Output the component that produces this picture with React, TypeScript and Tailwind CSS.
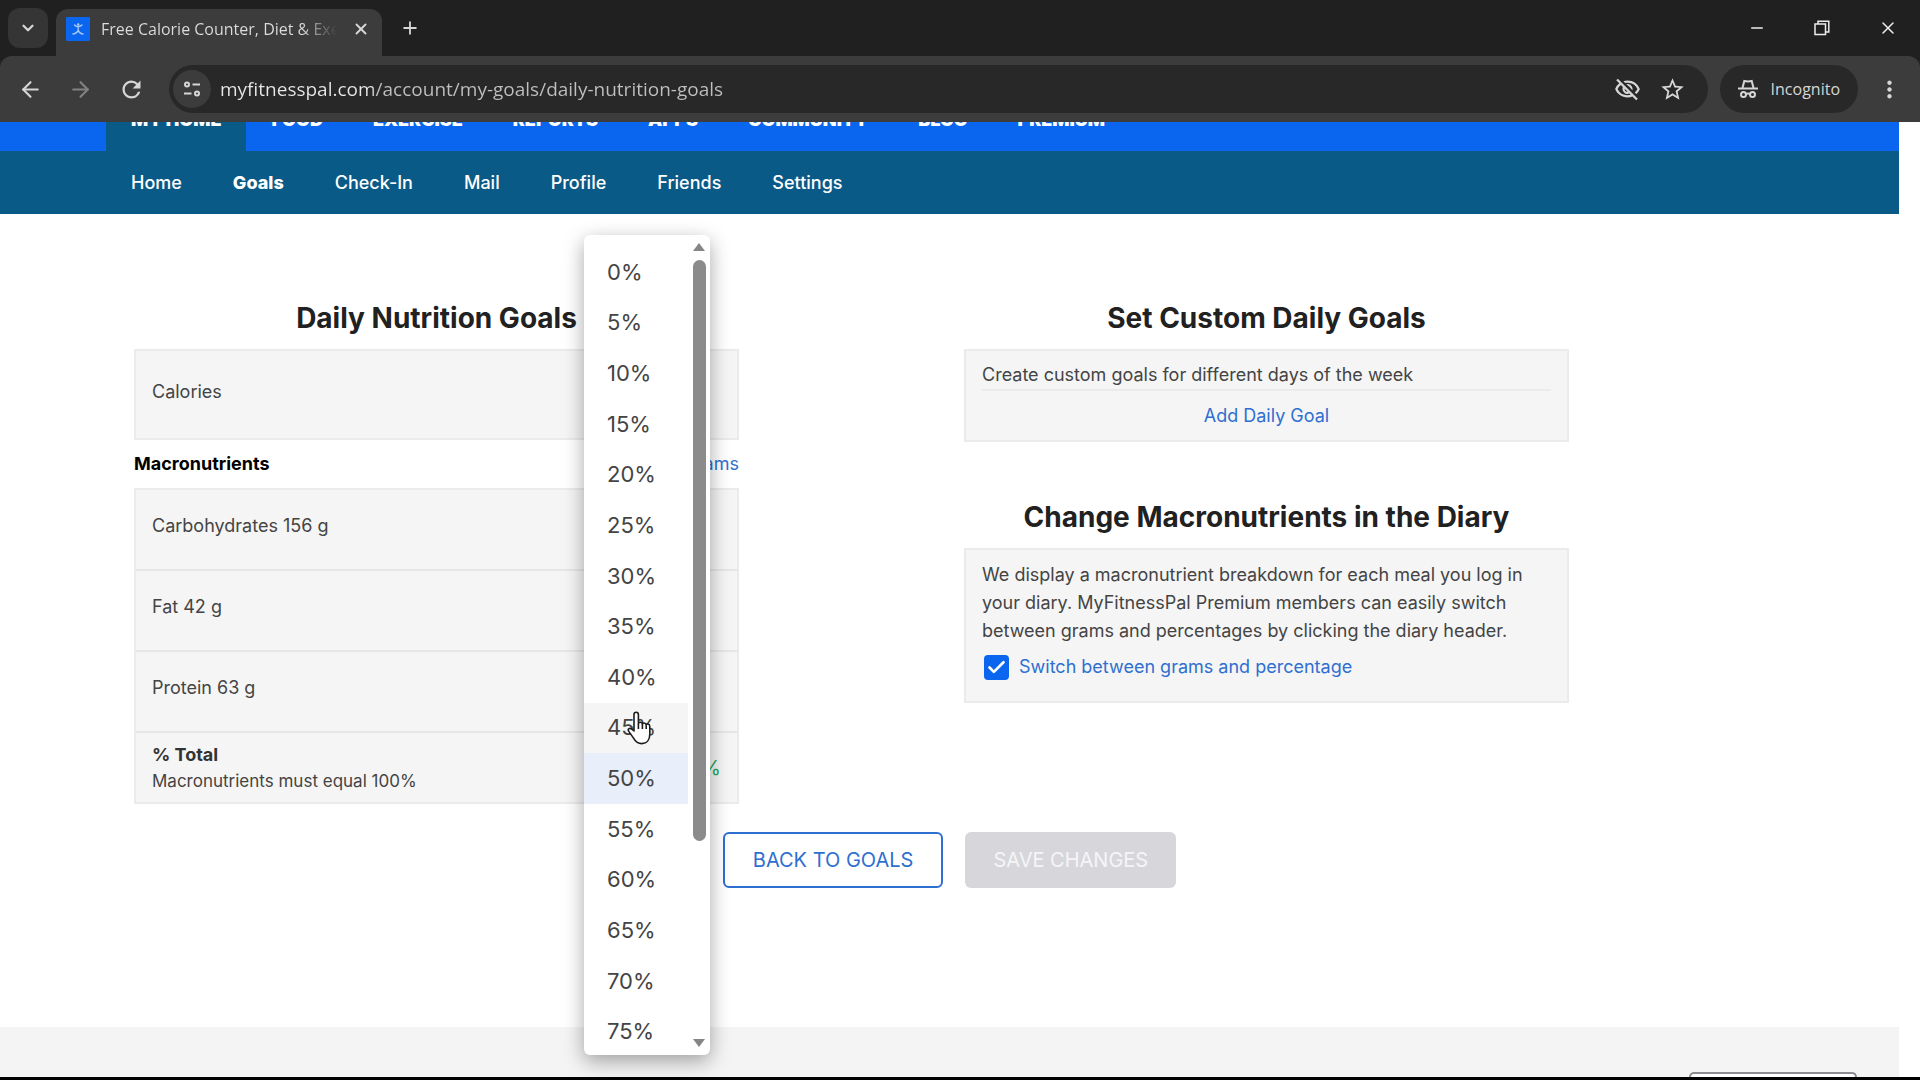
import type { ReactNode } from "react";
import { ArrowLeft, ArrowRight, Check, ChevronDown, Minus, Plus, X } from "lucide-react";
import {
  MdMoreVert,
  MdOutlineVisibilityOff,
  MdRefresh,
  MdStarOutline,
} from "react-icons/md";

const mainNav = ["My Home", "Food", "Exercise", "Reports", "Apps", "Community", "Blog", "Premium"];
const subNav = ["Home", "Goals", "Check-In", "Mail", "Profile", "Friends", "Settings"];
const percentages = Array.from({ length: 16 }, (_, i) => i * 5);
const macros = ["Carbohydrates 156 g", "Fat 42 g", "Protein 63 g"];

function TuneIcon() {
  return (
    <svg viewBox="0 0 20 20" className="size-5" fill="none" stroke="currentColor" strokeWidth="2">
      <circle cx="5" cy="5.500" r="2" />
      <path d="M10.500 5.500H18M2 14.500h7.500" />
      <circle cx="15" cy="14.500" r="2" />
    </svg>
  );
}

function IncognitoIcon() {
  return (
    <svg viewBox="0 0 22 22" className="size-[22px]" fill="none" stroke="currentColor" strokeWidth="2">
      <path d="M1 10.500h20" />
      <path d="M5.500 10 7.300 3c2.200.5 5.200.5 7.400 0l1.800 7" />
      <circle cx="6.500" cy="16.500" r="2.500" />
      <circle cx="15.500" cy="16.500" r="2.500" />
      <path d="M9 16c1.300-.6 2.700-.6 4 0" />
    </svg>
  );
}

function RestoreIcon() {
  return (
    <svg viewBox="0 0 16 16" className="size-4" fill="none" stroke="currentColor" strokeWidth="1.500">
      <rect x="1" y="4" width="10.500" height="10.500" />
      <path d="M4 4V1.200h10.800V12h-3" />
    </svg>
  );
}

function Favicon() {
  return (
    <svg viewBox="0 0 24 24" className="size-6 shrink-0">
      <rect width="24" height="24" rx="1" fill="#0a66ee" />
      <g stroke="#a9c9fb" strokeWidth="1.300" fill="none" strokeLinecap="round">
        <path d="M8.500 8c2 2 5 2 7.500 0M12.200 9.500v4M7 17c3-.5 4.500-1.500 5.200-4 .5 2.500 2 3.500 4.800 4" />
        <circle cx="12.200" cy="7.500" r="0.600" fill="#a9c9fb" />
      </g>
    </svg>
  );
}

function HandCursor() {
  return (
    <svg viewBox="0 0 28 34" className="h-[34px] w-7" fill="#fff" stroke="#1c1c1c" strokeWidth="1.600" strokeLinejoin="round">
      <path d="M8 20V3.600c0-3.200 4.400-3.200 4.400 0V13c0-2.400 4-2.200 4 .4 0-2 3.800-1.800 3.800.8 0-1.800 3.600-1.600 3.600 1.200V23c0 5.500-2.800 9.600-8 9.600-4.600 0-6.600-2.400-8.600-6l-4.400-6.200c-1.600-2.600 1-4 3-2.200z" />
      <path d="M12.400 13v5M16.400 13.500V18M20.200 14.500V18" fill="none" />
    </svg>
  );
}

function BrowserChrome() {
  return (
    <header className="shrink-0 bg-[#202020] font-['Open_Sans',sans-serif] text-[#d6d6d6]">
      <div className="flex h-14 items-end">
        <button aria-label="Search tabs" className="mr-2 mb-2 ml-2 grid size-10 place-items-center rounded-xl bg-[#353535]">
          <ChevronDown className="size-[18px]" strokeWidth={3} />
        </button>
        <div className="flex h-[47px] w-[326px] items-center rounded-t-xl bg-[#3c3c3c] pr-3 pb-2 pl-[10px]">
          <Favicon />
          <span className="ml-[11px] w-[236px] overflow-hidden bg-linear-to-r from-[#dedede] from-85% to-[#3c3c3c] bg-clip-text text-base whitespace-nowrap text-transparent">
            Free Calorie Counter, Diet &amp; Exercise
          </span>
          <button aria-label="Close tab" className="ml-auto">
            <X className="size-[18px]" strokeWidth={2.5} />
          </button>
        </div>
        <button aria-label="New tab" className="mb-[18px] ml-[18px]">
          <Plus className="size-5" strokeWidth={2.2} />
        </button>
        <div className="mr-[22px] mb-[18px] ml-auto flex items-center gap-[48px] text-[#ececec]">
          <button aria-label="Minimize"><Minus className="size-[18px]" strokeWidth={2} /></button>
          <button aria-label="Restore"><RestoreIcon /></button>
          <button aria-label="Close"><X className="size-5" strokeWidth={1.8} /></button>
        </div>
      </div>
      <div className="flex h-[66px] items-center rounded-t-xl bg-[#3c3c3c] pr-[17px] pl-[18px]">
        <button aria-label="Back"><ArrowLeft className="size-[25px]" /></button>
        <button aria-label="Forward" className="ml-[25px] text-[#828282]"><ArrowRight className="size-[25px]" /></button>
        <button aria-label="Reload" className="ml-[25px]"><MdRefresh className="size-[27px]" /></button>
        <div className="ml-6 flex h-12 flex-1 items-center rounded-full bg-[#282828] pr-[22px] pl-1">
          <button aria-label="View site information" className="grid size-[38px] place-items-center rounded-full bg-[#3c3c3c]">
            <TuneIcon />
          </button>
          <input
            aria-label="Address"
            className="ml-[9px] h-10 flex-1 bg-linear-to-r from-[#e8e8e8] from-[153px] to-[#c0c0c0] to-[153px] bg-clip-text text-[19px] text-transparent outline-none"
            defaultValue="myfitnesspal.com/account/my-goals/daily-nutrition-goals"
          />
          <button aria-label="Third-party cookies blocked"><MdOutlineVisibilityOff className="size-[27px]" /></button>
          <button aria-label="Bookmark" className="ml-[18px]"><MdStarOutline className="size-[27px]" /></button>
        </div>
        <button className="ml-3 flex h-12 items-center gap-3 rounded-full bg-[#282828] pr-[18px] pl-[17px] text-base">
          <IncognitoIcon />
          Incognito
        </button>
        <button aria-label="Menu" className="ml-[18px]"><MdMoreVert className="size-[27px]" /></button>
      </div>
    </header>
  );
}

function SiteNav() {
  return (
    <div className="text-lg text-white">
      <nav aria-label="Main" className="-mt-[33px] flex h-[62px] bg-[#0a66ee] pl-[106px] font-black uppercase">
        {mainNav.map((item, i) => (
          <a key={item} href="#" className={i === 0 ? "flex items-center bg-[#0a5a87] px-[25px]" : "flex items-center px-[25px]"}>
            {item}
          </a>
        ))}
      </nav>
      <nav aria-label="My Home" className="flex h-[63px] items-center gap-[51px] bg-[#0a5a87] pl-[131px]">
        {subNav.map((item) => (
          <a key={item} href="#" className={item === "Goals" ? "font-extrabold" : "font-medium"}>
            {item}
          </a>
        ))}
      </nav>
    </div>
  );
}

function Heading({ children }: { children: ReactNode }) {
  return <h2 className="text-center text-[28px] leading-10 font-bold text-[#212121]">{children}</h2>;
}

function PercentMenu() {
  return (
    <div className="absolute top-[113px] left-[584px] flex h-[820px] w-[126px] overflow-hidden rounded-md bg-white shadow-[0_6px_20px_rgba(0,0,0,0.35)]">
      <ul role="listbox" aria-label="Carbohydrates percentage" className="mt-3 flex h-[810px] flex-1 flex-col text-[22px] text-[#444]">
        {percentages.map((value) => (
          <li
            key={value}
            role="option"
            aria-selected={value === 50}
            className={
              value === 50
                ? "flex flex-1 items-center bg-[#e9eefb] pl-[23px]"
                : value === 45
                  ? "flex flex-1 items-center bg-[#f5f5f5] pl-[23px]"
                  : "flex flex-1 items-center pl-[23px]"
            }
          >
            {value}%
          </li>
        ))}
      </ul>
      <div className="flex w-[22px] flex-col items-center py-2">
        <svg viewBox="0 0 12 8" className="h-2 w-3 fill-[#858585]"><path d="M6 0l6 8H0z" /></svg>
        <div className="mt-[9px] h-[581px] w-[13px] rounded-full bg-[#8b8b8b]" />
        <svg viewBox="0 0 12 8" className="mt-auto h-2 w-3 fill-[#858585]"><path d="M0 0h12L6 8z" /></svg>
      </div>
    </div>
  );
}

export default function App() {
  return (
    <div className="flex h-screen flex-col overflow-hidden bg-white font-['Inter',sans-serif]">
      <BrowserChrome />
      <div className="relative flex flex-1 flex-col overflow-hidden pr-[21px]">
        <SiteNav />
        <main className="pt-[84px] text-lg text-[#444]">
          <div className="grid grid-cols-2 gap-x-[225px] pr-[330px] pl-[134px]">
            <section>
              <Heading>Daily Nutrition Goals</Heading>
              <div className="mt-[11px] flex h-[91px] items-center border-2 border-[#ebebeb] bg-[#f5f5f5] px-4 pb-1.5">Calories</div>
              <div className="flex h-12 items-center justify-between">
                <h3 className="font-bold text-black">Macronutrients</h3>
                <a href="#" className="text-[#2f6fd0]">Grams</a>
              </div>
              <div className="border-2 border-[#ebebeb] bg-[#f5f5f5]">
                {macros.map((macro) => (
                  <div key={macro} className="flex h-[81px] items-center border-b-2 border-[#e6e6e6] px-4 pb-2">{macro}</div>
                ))}
                <div className="flex h-[69px] items-center justify-between px-4">
                  <div>
                    <p className="leading-[26px] font-bold text-[#333]">% Total</p>
                    <p className="text-[17px] leading-[26px]">Macronutrients must equal 100%</p>
                  </div>
                  <span className="text-xl text-[#22a85a]">100%</span>
                </div>
              </div>
            </section>
            <section>
              <Heading>Set Custom Daily Goals</Heading>
              <div className="mt-[11px] border-2 border-[#ebebeb] bg-[#f5f5f5] px-4 pt-[10px] pb-1">
                <p className="border-b-2 border-[#ebebeb] leading-7">Create custom goals for different days of the week</p>
                <p className="pt-[5px] text-center leading-10">
                  <a href="#" className="text-[#2f6fd0]">Add Daily Goal</a>
                </p>
              </div>
              <div className="mt-[55px]">
                <Heading>Change Macronutrients in the Diary</Heading>
              </div>
              <div className="mt-[11px] h-[155px] border-2 border-[#ebebeb] bg-[#f5f5f5] px-4 pt-[11px]">
                <p className="leading-7">
                  We display a macronutrient breakdown for each meal you log in your diary. MyFitnessPal Premium members
                  can easily switch between grams and percentages by clicking the diary header.
                </p>
                <label className="mt-2 flex items-center gap-[10px] text-[#2f6fd0]">
                  <span className="ml-0.5 grid size-[25px]">
                    <input type="checkbox" defaultChecked className="col-start-1 row-start-1 appearance-none rounded-sm bg-[#0a66ee]" />
                    <Check className="pointer-events-none col-start-1 row-start-1 size-[21px] self-center justify-self-center text-white" strokeWidth={3} />
                  </span>
                  Switch between grams and percentage
                </label>
              </div>
            </section>
          </div>
          <div className="mt-7 flex justify-center gap-[22px] text-xl">
            <button className="h-14 rounded-md border-2 border-[#2f6fd0] px-7 text-[#2f6fd0]">BACK TO GOALS</button>
            <button disabled className="h-14 rounded-md bg-[#d7d7db] px-7 text-[#f5f5f7]">SAVE CHANGES</button>
          </div>
        </main>
        <footer className="mt-auto flex h-[50px] items-end justify-end overflow-hidden bg-[#f4f4f4] pr-[42px]">
          <div className="h-[5px] w-[168px] rounded-t-md border-2 border-b-0 border-[#8c8c90] bg-white" />
        </footer>
        <PercentMenu />
        <div className="pointer-events-none absolute top-[589px] left-[626px]"><HandCursor /></div>
      </div>
      <div className="h-[3px] shrink-0 bg-black" />
    </div>
  );
}
